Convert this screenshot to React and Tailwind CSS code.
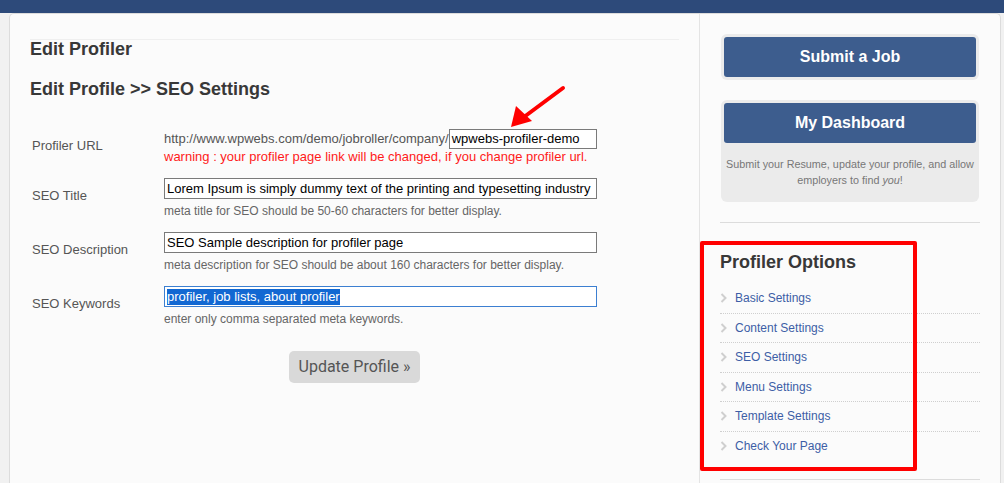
import React from 'react';

const font = "font-['Liberation_Sans',Arial,sans-serif]";

function Field({ label, value, help, selected }) {
  return (
    <div className="flex mt-[13px]">
      <div className="w-[132px] ml-[2px] pt-[10px] leading-4 text-[13px] text-[#555]">{label}</div>
      <div>
        <div
          className={`w-[433px] h-[21px] border flex items-center px-[2px] text-[13px] text-black bg-white ${
            selected ? 'border-[#3c7fd1]' : 'border-[#7a7a7a]'
          }`}
        >
          {selected ? <span className="bg-[#1268d2] text-white leading-[16px]">{value}</span> : value}
        </div>
        <div className="mt-[4px] leading-4 text-[12px] text-[#666]">{help}</div>
      </div>
    </div>
  );
}

function Chevron() {
  return (
    <svg width="7" height="10" viewBox="0 0 7 10" className="shrink-0">
      <polyline points="1.5,1 5.5,5 1.5,9" fill="none" stroke="#cfcfcf" strokeWidth="2" />
    </svg>
  );
}

const options = ['Basic Settings', 'Content Settings', 'SEO Settings', 'Menu Settings', 'Template Settings', 'Check Your Page'];

export default function App() {
  return (
    <div className={`relative w-[1004px] h-[483px] overflow-hidden bg-[#f1f1f1] ${font}`}>
      <div className="h-[13px] bg-[#2d4a7a]" />
      <div className="pl-[9px] pr-[3px]">
        <div className="flex h-[470px] w-[992px] bg-[#fbfbfb] border-l border-r border-t border-[#dcdcdc] rounded-t-[5px]">
          {/* main column */}
          <div className="w-[690px] border-r border-[#e4e4e4] pl-[20px]">
            <h2 className="mt-[25px] mr-[20px] border-t border-[#efefef] leading-[19px] text-[18px] font-bold text-[#383838]">
              Edit Profiler
            </h2>
            <h2 className="mt-[21px] leading-[19px] text-[18px] font-bold text-[#383838]">
              Edit Profile &gt;&gt; SEO Settings
            </h2>

            <div className="mt-[30px] flex">
              <div className="w-[132px] ml-[2px] pt-[9px] leading-4 text-[13px] text-[#555]">Profiler URL</div>
              <div>
                <div className="flex items-center h-[20px]">
                  <span className="text-[13px] text-[#555]">http://www.wpwebs.com/demo/jobroller/company/</span>
                  <div className="w-[148px] h-[20px] border border-[#7a7a7a] bg-white flex items-center px-[2px] text-[13px] text-black">
                    wpwebs-profiler-demo
                  </div>
                </div>
                <div className="leading-4 text-[13px] text-[#ff1a1a]">
                  warning : your profiler page link will be changed, if you change profiler url.
                </div>
              </div>
            </div>

            <Field
              label="SEO Title"
              value="Lorem Ipsum is simply dummy text of the printing and typesetting industry"
              help="meta title for SEO should be 50-60 characters for better display."
            />
            <Field
              label="SEO Description"
              value="SEO Sample description for profiler page"
              help="meta description for SEO should be about 160 characters for better display."
            />
            <Field
              label="SEO Keywords"
              value="profiler, job lists, about profiler"
              help="enter only comma separated meta keywords."
              selected
            />

            <div className="mt-[24px] flex justify-center pr-[20px]">
              <button className="w-[131px] h-[32px] rounded-[5px] bg-[#d9d9d9] text-[16px] text-[#555] font-['Roboto',sans-serif]">
                Update Profile »
              </button>
            </div>
          </div>

          {/* sidebar */}
          <div className="w-[300px] px-[20px]">
            <div className="mt-[20px] mx-[1px] p-[3px] bg-[#ebebeb] rounded-[6px]">
              <div className="h-[40px] rounded-[3px] bg-[#3d5d8e] flex items-center justify-center text-white font-bold text-[16px]">
                Submit a Job
              </div>
            </div>
            <div className="mt-[20px] mx-[1px] p-[3px] bg-[#ebebeb] rounded-[6px]">
              <div className="h-[40px] rounded-[3px] bg-[#3d5d8e] flex items-center justify-center text-white font-bold text-[16px]">
                My Dashboard
              </div>
              <p className="mt-[13px] mb-[11px] text-center whitespace-nowrap leading-[16px] text-[10.8px] text-[#777]">
                Submit your Resume, update your profile, and allow
                <br />
                employers to find <i>you</i>!
              </p>
            </div>
            <div className="mt-[20px] border-t border-[#dcdcdc]" />
            <h3 className="mt-[30px] leading-[18px] text-[18px] font-bold text-[#383838]">Profiler Options</h3>
            <ul className="mt-[13px]">
              {options.map((o, i) => (
                <li
                  key={o}
                  className={`h-[29.5px] flex items-center gap-[8px] text-[12px] text-[#3d5ea6] ${
                    i < options.length - 1 ? 'border-b border-dotted border-[#cfcfcf]' : ''
                  }`}
                >
                  <Chevron />
                  {o}
                </li>
              ))}
            </ul>
            <div className="mt-[18px] border-t border-[#dcdcdc]" />
          </div>
        </div>
      </div>

      {/* annotations */}
      <div className="absolute left-[700px] top-[241px] w-[217px] h-[230px] border-4 border-[#ff0000] rounded-[2px]" />
      <svg className="absolute left-0 top-0" width="1004" height="483" viewBox="0 0 1004 483">
        <line x1="563" y1="88" x2="524" y2="117" stroke="#ff0000" strokeWidth="4" strokeLinecap="round" />
        <polygon points="511,127 516,106 532,121" fill="#ff0000" />
      </svg>
    </div>
  );
}
